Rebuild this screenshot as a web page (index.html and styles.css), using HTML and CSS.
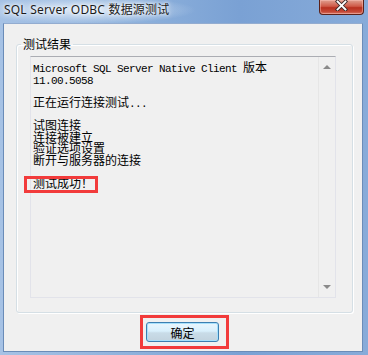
FILE: index.html
```html
<!DOCTYPE html>
<html lang="zh-CN">
<head>
    <meta charset="UTF-8">
    <title>SQL Server ODBC 数据源测试</title>
    <link rel="stylesheet" href="styles.css">
</head>
<body>
    <div class="window">
        <div class="titlebar">
            <span class="title">SQL Server ODBC 数据源测试</span>
            <button class="close" aria-label="关闭">
                <svg width="13" height="11" viewBox="0 0 13 11">
                    <path d="M2.5 1.5 L10.5 9.5 M10.5 1.5 L2.5 9.5" stroke="#3a2a2a" stroke-width="3.6" stroke-linecap="square"/>
                    <path d="M2.5 1.5 L10.5 9.5 M10.5 1.5 L2.5 9.5" stroke="#fff" stroke-width="1.8" stroke-linecap="square"/>
                </svg>
            </button>
        </div>

        <div class="client">
            <fieldset class="group">
                <legend>测试结果</legend>
                <div class="log">
                    <div class="log-text">
                        <div class="line"><span class="en">Microsoft SQL Server Native Client </span>版本</div>
                        <div class="line"><span class="en">11.00.5058</span></div>
                        <div class="line"></div>
                        <div class="line">正在运行连接测试<span class="en">...</span></div>
                        <div class="line"></div>
                        <div class="line">试图连接</div>
                        <div class="line">连接被建立</div>
                        <div class="line">验证选项设置</div>
                        <div class="line">断开与服务器的连接</div>
                        <div class="line"></div>
                        <div class="line"><span class="ok-mark">测试成功！</span></div>
                    </div>
                    <div class="scroll">
                        <span class="arrow up"></span>
                        <span class="arrow down"></span>
                    </div>
                </div>
            </fieldset>

            <div class="actions">
                <span class="btn-mark">
                    <button class="btn">确定</button>
                </span>
            </div>
        </div>
    </div>
</body>
</html>
```

FILE: styles.css
```css
body {
    margin: 0;
    font-family: "Noto Sans", "Noto Sans CJK SC", sans-serif;
}

.window {
    width: 368px;
    height: 355px;
    display: flex;
    flex-direction: column;
    background: linear-gradient(to right, #a6c2e5, #8fb2dc 35%, #7aa1d4 65%, #87abd9 100%);
}

.titlebar {
    height: 23px;
    display: flex;
    align-items: flex-start;
    background: radial-gradient(ellipse 110px 14px at 86px 10px, rgba(235, 243, 252, 0.85), rgba(235, 243, 252, 0) 100%);
}

.title {
    padding: 2px 0 0 4px;
    font-size: 12px;
    line-height: 16px;
    letter-spacing: 0.2px;
    color: #1b1b1b;
    text-shadow: 0 0 6px #fff, 0 0 3px #fff;
    white-space: nowrap;
}

.close {
    margin-left: auto;
    margin-right: 4px;
    width: 45px;
    height: 15px;
    padding: 0 0 3px;
    border: 1px solid #5b2119;
    border-top: none;
    border-radius: 0 0 4px 4px;
    background: linear-gradient(#e0a090, #cf5a48 45%, #b8301f 55%, #c64a38 85%, #d98070);
    box-shadow: inset 0 0 0 1px rgba(255, 200, 190, 0.45);
    display: flex;
    align-items: center;
    justify-content: center;
}

.client {
    flex: 1;
    margin: 0 5px 3px 3px;
    padding: 12px 9px 0 12px;
    background: #f0f0f0;
    border: 1px solid #6a8cb8;
    border-top-color: #93acd0;
    box-sizing: border-box;
}

.group {
    margin: 0;
    padding: 4px 16px 14px 13px;
    border: 1px solid #d5dfe5;
    border-radius: 3px;
    box-shadow: inset 1px 1px 0 #fff, 1px 1px 0 #fff;
}

.group legend {
    margin-left: -9px;
    padding: 0 2px;
    font-family: "Noto Sans CJK SC", sans-serif;
    font-size: 12px;
    line-height: 16px;
    color: #000;
}

.log {
    height: 242px;
    display: flex;
    border: 1px solid #e2e3ea;
    border-top-color: #abadb3;
    background: #f0f0f0;
    box-sizing: border-box;
}

.log-text {
    flex: 1;
    padding: 4px 0 0 2px;
    font-family: "Noto Sans CJK SC", sans-serif;
    font-size: 12px;
    line-height: 11.6px;
    color: #000;
    white-space: nowrap;
}

.line {
    height: 11.6px;
}

.en {
    font-family: "Liberation Mono", monospace;
    font-size: 11px;
    letter-spacing: -0.6px;
}

/* red annotation frame around the result line */
.ok-mark {
    position: relative;
    display: inline-block;
    vertical-align: top;
    height: 11.6px;
}

.ok-mark::before {
    content: "";
    position: absolute;
    left: -9px;
    top: -1px;
    width: 74px;
    height: 17px;
    border: 3px solid #f23b3b;
    box-sizing: border-box;
}

.scroll {
    width: 16px;
    border-left: 1px solid #e6e6e6;
    background: #f0f0f0;
    display: flex;
    flex-direction: column;
    justify-content: space-between;
    align-items: center;
    padding: 8px 0 8px;
}

.arrow {
    width: 0;
    height: 0;
    border-left: 4px solid transparent;
    border-right: 4px solid transparent;
}

.arrow.up {
    border-bottom: 4px solid #8a8a8a;
}

.arrow.down {
    border-top: 4px solid #8a8a8a;
}

.actions {
    display: flex;
    justify-content: center;
    margin-top: 2px;
}

.btn-mark {
    display: inline-flex;
    padding: 4px 7px 4px 3px;
    border: 3px solid #f23b3b;
}

.btn {
    width: 73px;
    height: 20px;
    padding: 0;
    font-family: "Noto Sans CJK SC", sans-serif;
    font-size: 12px;
    color: #000;
    border: 1px solid #3c7fb1;
    border-radius: 3px;
    background: linear-gradient(#eaf6fd, #d9f0fc 45%, #c9dce8 55%, #c2d3de);
    box-shadow: inset 0 0 0 1px #a7e0fb;
}
```
